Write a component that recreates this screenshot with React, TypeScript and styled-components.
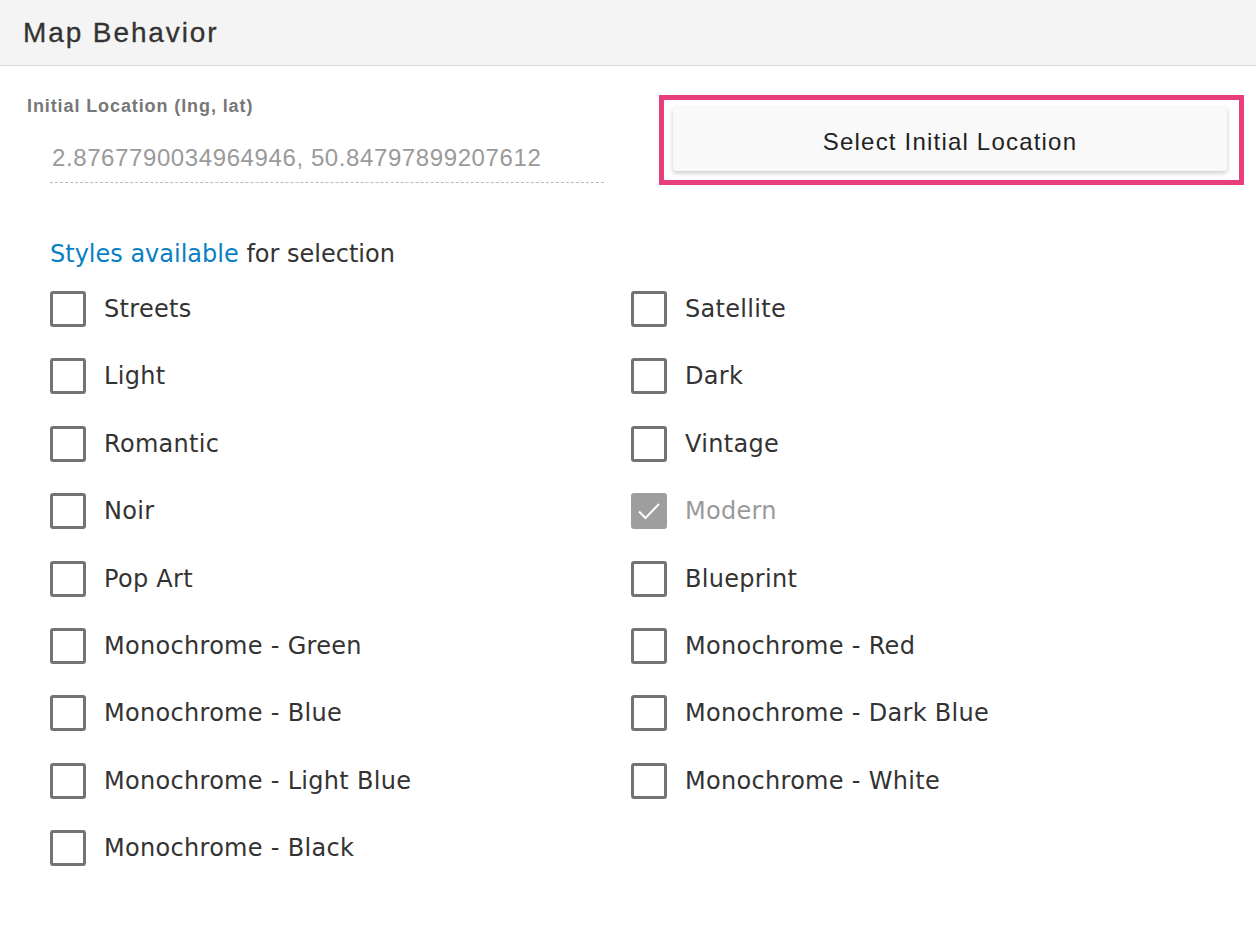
import React from 'react';
import styled, { createGlobalStyle } from 'styled-components';

const GlobalStyle = createGlobalStyle`
  body {
    margin: 0;
    background: #ffffff;
    font-family: 'Liberation Sans', Arial, sans-serif;
  }
`;

const Panel = styled.section`
  width: 1256px;
  min-height: 938px;
  background: #fff;
`;

const Header = styled.header`
  height: 66px;
  box-sizing: border-box;
  background: #f4f4f4;
  border-bottom: 1px solid #dddddd;
  display: flex;
  align-items: center;
  padding: 0 0 0 23px;
`;

const Title = styled.h2`
  margin: 0;
  font-family: 'Liberation Sans', Arial, sans-serif;
  font-size: 28px;
  font-weight: 400;
  letter-spacing: 1.9px;
  color: #333;
  -webkit-text-stroke: 0.3px #333;
`;

const Body = styled.div`
  padding: 30px 12px 0 27px;
`;

const TopRow = styled.div`
  display: flex;
  justify-content: space-between;
  align-items: flex-start;
`;

const Field = styled.div`
  width: 577px;
  display: flex;
  flex-direction: column;
`;

const FieldLabel = styled.label`
  font-family: 'Liberation Sans', Arial, sans-serif;
  font-size: 18px;
  font-weight: 700;
  letter-spacing: 0.9px;
  color: #777;
  line-height: 20px;
`;

const FieldValue = styled.div`
  margin: 29px 0 0 23px;
  padding: 0 0 11px 2px;
  border-bottom: 1px dashed #bbb;
  font-family: 'Liberation Sans', Arial, sans-serif;
  font-size: 24px;
  letter-spacing: 0.6px;
  color: #9a9a9a;
  line-height: 26px;
`;

const Highlight = styled.div`
  margin-top: -1px;
  width: 585px;
  height: 90px;
  box-sizing: border-box;
  border: 5px solid #e83e7c;
  padding: 7px 12px 0 9px;
`;

const Button = styled.button`
  width: 100%;
  height: 64px;
  padding: 5px 0 0;
  border: none;
  border-radius: 3px;
  background: #f9f9f9;
  box-shadow: 0 2px 5px rgba(0, 0, 0, 0.22);
  font-family: 'Liberation Sans', Arial, sans-serif;
  font-size: 24px;
  letter-spacing: 1.2px;
  color: #222;
  cursor: pointer;
`;

const SectionTitle = styled.p`
  margin: 54px 0 0 23px;
  font-family: 'DejaVu Sans', sans-serif;
  font-size: 24px;
  color: #333;
  line-height: 30px;
`;

const Accent = styled.span`
  color: #0a7fc4;
`;

const Grid = styled.div`
  margin: 22px 0 0 23px;
  display: grid;
  grid-template-columns: 581px 1fr;
  grid-auto-rows: 67.4px;
`;

const Option = styled.label<{ disabled?: boolean }>`
  display: flex;
  align-items: flex-start;
  gap: 18px;
  font-family: 'DejaVu Sans', sans-serif;
  font-size: 24px;
  letter-spacing: 0.3px;
  color: ${({ disabled }) => (disabled ? '#9a9a9a' : '#333')};
  line-height: 36px;
`;

const Box = styled.span<{ checked?: boolean }>`
  width: 36px;
  height: 36px;
  box-sizing: border-box;
  border-radius: 3px;
  border: 3px solid ${({ checked }) => (checked ? '#9e9e9e' : '#737373')};
  background: ${({ checked }) => (checked ? '#9e9e9e' : '#fff')};
  display: flex;
  align-items: center;
  justify-content: center;
  flex-shrink: 0;
`;

const styles: { name: string; checked?: boolean }[] = [
  { name: 'Streets' },
  { name: 'Satellite' },
  { name: 'Light' },
  { name: 'Dark' },
  { name: 'Romantic' },
  { name: 'Vintage' },
  { name: 'Noir' },
  { name: 'Modern', checked: true },
  { name: 'Pop Art' },
  { name: 'Blueprint' },
  { name: 'Monochrome - Green' },
  { name: 'Monochrome - Red' },
  { name: 'Monochrome - Blue' },
  { name: 'Monochrome - Dark Blue' },
  { name: 'Monochrome - Light Blue' },
  { name: 'Monochrome - White' },
  { name: 'Monochrome - Black' },
];

export default function App() {
  return (
    <Panel>
      <GlobalStyle />
      <Header>
        <Title>Map Behavior</Title>
      </Header>
      <Body>
        <TopRow>
          <Field>
            <FieldLabel>Initial Location (lng, lat)</FieldLabel>
            <FieldValue>2.8767790034964946, 50.84797899207612</FieldValue>
          </Field>
          <Highlight>
            <Button>Select Initial Location</Button>
          </Highlight>
        </TopRow>
        <SectionTitle>
          <Accent>Styles available</Accent> for selection
        </SectionTitle>
        <Grid>
          {styles.map((s) => (
            <Option key={s.name} disabled={s.checked}>
              <Box checked={s.checked}>
                {s.checked && (
                  <svg width="30" height="30" viewBox="0 0 30 30">
                    <path d="M5 15.5l6.5 6.5L25 8" fill="none" stroke="#fff" strokeWidth="2" />
                  </svg>
                )}
              </Box>
              {s.name}
            </Option>
          ))}
        </Grid>
      </Body>
    </Panel>
  );
}
